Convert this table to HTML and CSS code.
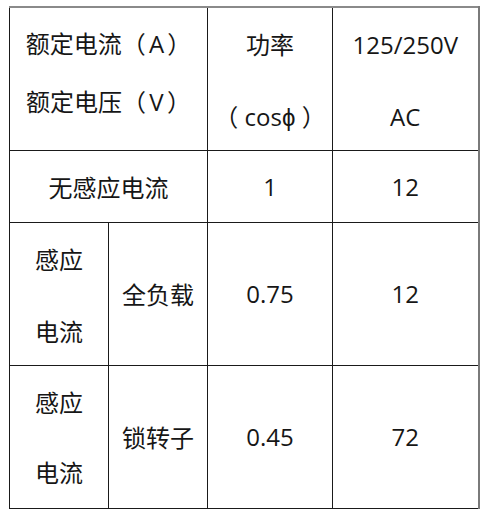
FILE: index.html
```html
<!DOCTYPE html>
<html lang="zh">
<head>
<meta charset="utf-8">
<link rel="stylesheet" href="styles.css">
</head>
<body>
<table class="spec">
  <colgroup>
    <col class="c1"><col class="c2"><col class="c3"><col class="c4">
  </colgroup>
  <tr class="r-head">
    <td colspan="2" class="head-left"><div>额定电流（ A ）</div><div class="tail">额定电压（ V ）</div></td>
    <td class="head"><div>功率</div><div class="tail">（ cosϕ ）</div></td>
    <td class="head last"><div>125/250V</div><div class="tail">AC</div></td>
  </tr>
  <tr class="r-mid">
    <td colspan="2">无感应电流</td>
    <td>1</td>
    <td class="last">12</td>
  </tr>
  <tr class="r-big">
    <td class="stack"><div>感应</div><div class="tail">电流</div></td>
    <td>全负载</td>
    <td>0.75</td>
    <td class="last">12</td>
  </tr>
  <tr class="r-big">
    <td class="stack tight"><div>感应</div><div class="tail">电流</div></td>
    <td>锁转子</td>
    <td>0.45</td>
    <td class="last">72</td>
  </tr>
</table>
</body>
</html>
```

FILE: styles.css
```css
html, body {
  margin: 0;
  padding: 0;
  background: #ffffff;
}

body {
  padding: 6px 0 0 9px;
  font-family: "Open Sans", "Noto Sans CJK SC", sans-serif;
  font-size: 24px;
  color: #161616;
}

.spec {
  border-collapse: collapse;
  table-layout: fixed;
  width: 469px;
}

.c1 { width: 99px; }
.c2 { width: 99px; }
.c3 { width: 125px; }
.c4 { width: 146px; }

.spec td {
  border: 1px solid #1a1a1a;
  padding: 0;
  text-align: center;
  vertical-align: middle;
  white-space: nowrap;
}

.r-head {
  height: 143px;
}

.r-head td {
  border-top: 2px solid #8a8a8a;
  vertical-align: top;
}

.spec td.last {
  border-right: 2px solid #7a7a7a;
}

.tail {
  height: 40px;
}

.spec .head-left {
  padding-top: 7px;
  line-height: 58px;
  word-spacing: -3px;
}

.spec .head {
  padding-top: 1px;
  line-height: 72px;
}

.r-mid {
  height: 72px;
}

.r-big {
  height: 143px;
}

.spec .stack {
  vertical-align: top;
  padding-top: 1px;
  line-height: 72px;
}

.spec .stack.tight {
  padding-top: 2px;
  line-height: 70px;
}
```
